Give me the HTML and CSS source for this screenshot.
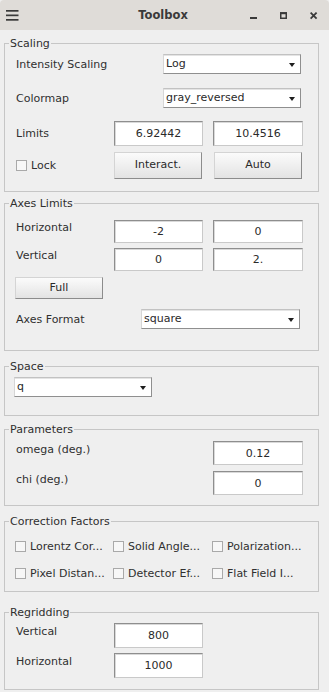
FILE: index.html
```html
<!DOCTYPE html>
<html>
<head>
<meta charset="utf-8">
<link rel="stylesheet" href="styles.css">
</head>
<body>
<div class="titlebar">
  <div class="tb-left">
    <svg class="hamb" width="13" height="11" viewBox="0 0 13 11"><rect x="0" y="0" width="12.5" height="1.7" fill="#3a3a3a"/><rect x="0" y="4.5" width="12.5" height="1.7" fill="#3a3a3a"/><rect x="0" y="9" width="12.5" height="1.7" fill="#3a3a3a"/></svg>
  </div>
  <div class="tb-title">Toolbox</div>
  <div class="tb-right">
    <svg class="wc wc-min" width="8" height="8" viewBox="0 0 8 8"><rect x="0" y="5" width="7" height="2" fill="#3a3a3a"/></svg>
    <svg class="wc wc-max" width="8" height="8" viewBox="0 0 8 8"><rect x="0.75" y="1" width="5.5" height="5.25" fill="none" stroke="#3a3a3a" stroke-width="1.5"/><rect x="0" y="0.2" width="7" height="2" fill="#3a3a3a"/></svg>
    <svg class="wc wc-close" width="8" height="8" viewBox="0 0 8 8"><path d="M0.6 0.6 L6.6 6.6 M6.6 0.6 L0.6 6.6" stroke="#3a3a3a" stroke-width="1.8"/></svg>
  </div>
</div>

<div class="panel">
  <fieldset class="group g-scaling">
    <legend>Scaling</legend>
    <div class="row h20">
      <span class="lbl w148">Intensity Scaling</span>
      <div class="combo cw138">Log<span class="arrow"></span></div>
    </div>
    <div class="row h20 mt14">
      <span class="lbl w148">Colormap</span>
      <div class="combo cw138">gray_reversed<span class="arrow"></span></div>
    </div>
    <div class="row h25 mt13">
      <span class="lbl w99">Limits</span>
      <div class="field fw89">6.92442</div>
      <div class="field fw90 ml10">10.4516</div>
    </div>
    <div class="row h27 mt6">
      <span class="lbl w99 chk-lbl"><span class="box"></span>Lock</span>
      <div class="btn bw88">Interact.</div>
      <div class="btn bw88 ml12">Auto</div>
    </div>
  </fieldset>

  <fieldset class="group g-axes">
    <legend>Axes Limits</legend>
    <div class="row h23">
      <span class="lbl w99 up">Horizontal</span>
      <div class="field fw89">-2</div>
      <div class="field fw90 ml10">0</div>
    </div>
    <div class="row h23 mt5">
      <span class="lbl w99 up">Vertical</span>
      <div class="field fw89">0</div>
      <div class="field fw90 ml10">2.</div>
    </div>
    <div class="row h22 mt6">
      <div class="btn bw88">Full</div>
    </div>
    <div class="row h20 mt10">
      <span class="lbl w126">Axes Format</span>
      <div class="combo cw159">square<span class="arrow"></span></div>
    </div>
  </fieldset>

  <fieldset class="group g-space">
    <legend>Space</legend>
    <div class="row h20 neg1">
      <div class="combo cw138">q<span class="arrow"></span></div>
    </div>
  </fieldset>

  <fieldset class="group g-params">
    <legend>Parameters</legend>
    <div class="row h24">
      <span class="lbl w198 up">omega (deg.)</span>
      <div class="field fw90">0.12</div>
    </div>
    <div class="row h24 mt6">
      <span class="lbl w198 up">chi (deg.)</span>
      <div class="field fw90">0</div>
    </div>
  </fieldset>

  <fieldset class="group g-corr">
    <legend>Correction Factors</legend>
    <div class="cgrid">
      <span class="chk-lbl"><span class="box"></span>Lorentz Cor...</span>
      <span class="chk-lbl"><span class="box"></span>Solid Angle...</span>
      <span class="chk-lbl"><span class="box"></span>Polarization...</span>
      <span class="chk-lbl"><span class="box"></span>Pixel Distan...</span>
      <span class="chk-lbl"><span class="box"></span>Detector Ef...</span>
      <span class="chk-lbl"><span class="box"></span>Flat Field I...</span>
    </div>
  </fieldset>

  <fieldset class="group g-regrid">
    <legend>Regridding</legend>
    <div class="row h25">
      <span class="lbl w99 up">Vertical</span>
      <div class="field fw89">800</div>
    </div>
    <div class="row h25 mt5">
      <span class="lbl w99 up">Horizontal</span>
      <div class="field fw89">1000</div>
    </div>
  </fieldset>
</div>
</body>
</html>
```

FILE: styles.css
```css
html, body {
  margin: 0;
  padding: 0;
}
body {
  width: 329px;
  height: 692px;
  background: #efefef;
  font-family: "DejaVu Sans", sans-serif;
  font-size: 11px;
  color: #303030;
  overflow: hidden;
}

/* ---- title bar ---- */
.titlebar {
  height: 30px;
  background: #dfdcd8;
  display: grid;
  grid-template-columns: 1fr auto 1fr;
  align-items: center;
  border-radius: 4px 4px 0 0;
}
.tb-left {
  display: flex;
  align-items: center;
  padding-left: 6px;
}
.hamb {
  display: block;
  margin-top: 1px;
}
.tb-title {
  font-weight: bold;
  font-size: 11.5px;
  color: #3a3a3a;
  margin-right: 3px;
}
.tb-right {
  display: flex;
  justify-content: flex-end;
  align-items: center;
  padding-right: 11px;
}
.wc {
  display: block;
  margin-top: 1px;
}
.wc-max { margin-left: 22px; }
.wc-close { margin-left: 22px; }

/* ---- panel / groups ---- */
.panel {
  padding: 7px 0 0 4px;
}
.group {
  box-sizing: border-box;
  width: 315px;
  margin: 0;
  padding: 0 0 0 10px;
  border: 1px solid #c6c6c6;
  min-inline-size: 0;
}
.group legend {
  margin-left: -6px;
  padding: 0 1px;
  line-height: 13px;
  font-size: 11px;
  color: #303030;
}
.g-scaling { padding-top: 4px; padding-bottom: 12px; }
.g-axes { margin-top: 5px; padding-top: 10px; padding-bottom: 21px; }
.g-space { margin-top: 9px; padding-top: 4px; padding-bottom: 18px; }
.g-params { margin-top: 7px; padding-top: 5px; padding-bottom: 10px; }
.g-corr { margin-top: 9px; padding-top: 10px; padding-bottom: 10px; }
.g-regrid { margin-top: 14px; padding-top: 4px; padding-bottom: 11px; }

/* ---- rows ---- */
.row {
  display: flex;
  align-items: center;
}
.h20 { height: 20px; }
.h22 { height: 22px; }
.h23 { height: 23px; }
.h24 { height: 24px; }
.h25 { height: 25px; }
.h27 { height: 27px; }
.mt5 { margin-top: 5px; }
.mt6 { margin-top: 6px; }
.mt10 { margin-top: 10px; }
.mt13 { margin-top: 13px; }
.mt14 { margin-top: 14px; }
.ml10 { margin-left: 10px; }
.ml12 { margin-left: 12px; }
.neg1 { margin-left: -1px; }

.lbl {
  flex: none;
  padding-left: 1px;
  box-sizing: border-box;
  white-space: nowrap;
}
.lbl.up { margin-bottom: 8px; }
.w99 { width: 99px; }
.w126 { width: 126px; }
.w148 { width: 148px; }
.w198 { width: 198px; }

/* ---- combo box ---- */
.combo {
  position: relative;
  box-sizing: border-box;
  height: 20px;
  line-height: 18px;
  padding-left: 2px;
  background: #ffffff;
  border: 1px solid;
  border-color: #c2c2c2 #8f8f8f #8f8f8f #d6d6d6;
  box-shadow: inset 0 1px 0 #e4e4e4;
  color: #2a2a2a;
}
.cw138 { width: 138px; }
.cw159 { width: 159px; }
.arrow {
  position: absolute;
  right: 5px;
  top: 8px;
  width: 0;
  height: 0;
  border-left: 3.5px solid transparent;
  border-right: 3.5px solid transparent;
  border-top: 4px solid #1e1e1e;
}

/* ---- line edit ---- */
.field {
  box-sizing: border-box;
  height: 100%;
  background: #ffffff;
  border: 1px solid;
  border-color: #8e8e8e #c9c9c9 #c9c9c9 #8e8e8e;
  box-shadow: inset 1px 1px 0 #d9d9d9;
  display: flex;
  align-items: center;
  justify-content: center;
  color: #2a2a2a;
}
.fw89 { width: 89px; }
.fw90 { width: 90px; }

/* ---- push button ---- */
.btn {
  box-sizing: border-box;
  height: 100%;
  border: 1px solid;
  border-color: #d4d4d4 #8c8c8c #8c8c8c #d4d4d4;
  background: linear-gradient(#fbfbfb, #e3e3e3);
  display: flex;
  align-items: center;
  justify-content: center;
  padding-bottom: 2px;
  color: #2a2a2a;
}
.bw88 { width: 88px; }

/* ---- check box ---- */
.chk-lbl {
  display: flex;
  align-items: center;
  white-space: nowrap;
}
.box {
  box-sizing: border-box;
  width: 11px;
  height: 11px;
  border: 1px solid #a9a9a9;
  background: #f7f7f7;
  margin-right: 4px;
  flex: none;
}
.cgrid {
  display: grid;
  grid-template-columns: 98px 99px auto;
  grid-auto-rows: 16px;
  row-gap: 11px;
}
```
